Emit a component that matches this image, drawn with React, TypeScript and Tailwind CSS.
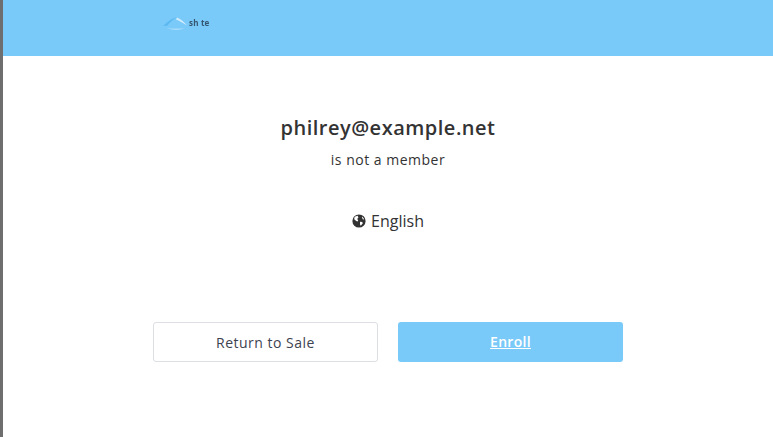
import React from "react";

function Globe() {
  return (
    <svg width="14" height="14" viewBox="0 0 14 14" className="shrink-0">
      <circle cx="7" cy="7" r="6.6" fill="#333" />
      <path d="M2.6 2.8 L5.6 1.8 L6.4 3.4 L5.2 5 L6.2 6.2 L5.6 7.4 L4.2 7 L2.2 5.2 Z" fill="#fff" />
      <path d="M8 7.8 L10.4 8 L10.6 9.4 L9 11.6 L8.2 11.2 L8 9.4 Z" fill="#fff" />
      <path d="M10.2 2.4 L11.8 4.4 L12.2 5.6 L10.8 5.2 L10 3.6 Z" fill="#fff" />
    </svg>
  );
}

function Logo() {
  return (
    <div className="flex items-start">
      <svg width="28" height="16" viewBox="0 0 28 16" className="shrink-0 blur-[0.7px]">
        <path d="M1 11 C6 6 11 3 15 2.5 C11 4.5 8 7 5 11 C4 10.8 3 10.8 1 11 Z" fill="#4fb0ee" opacity="0.7" />
        <path d="M15 2.5 C19 4 22 7 25 10.5 C21 8 18 6 14 4.5 Z" fill="#e8f5fd" opacity="0.8" />
        <path d="M5 13.5 C11 14.8 17 14.8 23 13.5 C17 13.8 11 13.8 5 13.5 Z" fill="#e8f5fd" opacity="0.9" />
      </svg>
      <span className="mt-[3px] -ml-[1px] font-['Open_Sans',sans-serif] text-[8px] leading-[10px] font-bold tracking-[0.2px] text-[#34566f] blur-[0.6px]">
        sh te
      </span>
    </div>
  );
}

export default function App() {
  return (
    <div className="flex h-[437px] w-[773px] overflow-hidden bg-white font-['Open_Sans',sans-serif]">
      <div className="w-[3px] shrink-0 bg-[#6e6e6e]" />
      <main className="flex min-w-0 flex-1 flex-col">
        <header className="flex h-14 shrink-0 items-start bg-[#79c9f9] pt-[15px] pl-[159px]">
          <Logo />
        </header>
        <div className="flex flex-col items-center pt-[60px]">
          <h1 className="text-[20px] leading-6 font-semibold tracking-[0.5px] text-[#333]">
            philrey@example.net
          </h1>
          <p className="mt-[11px] text-[14px] leading-[18px] tracking-[0.5px] text-[#333]">
            is not a member
          </p>
          <div className="mt-[40px] flex items-center gap-[5px] text-[16px] leading-6 text-[#333]">
            <Globe />
            <span>English</span>
          </div>
          <div className="mt-[89px] flex gap-5">
            <button className="h-10 w-[225px] rounded-[3px] border border-[#dcdfe4] bg-white text-[14px] tracking-[0.5px] text-[#3d4350]">
              Return to Sale
            </button>
            <button className="h-10 w-[225px] rounded-[3px] bg-[#79c9f9] pb-[2px] text-[14px] font-semibold tracking-[0.3px] text-white underline">
              Enroll
            </button>
          </div>
        </div>
      </main>
    </div>
  );
}
